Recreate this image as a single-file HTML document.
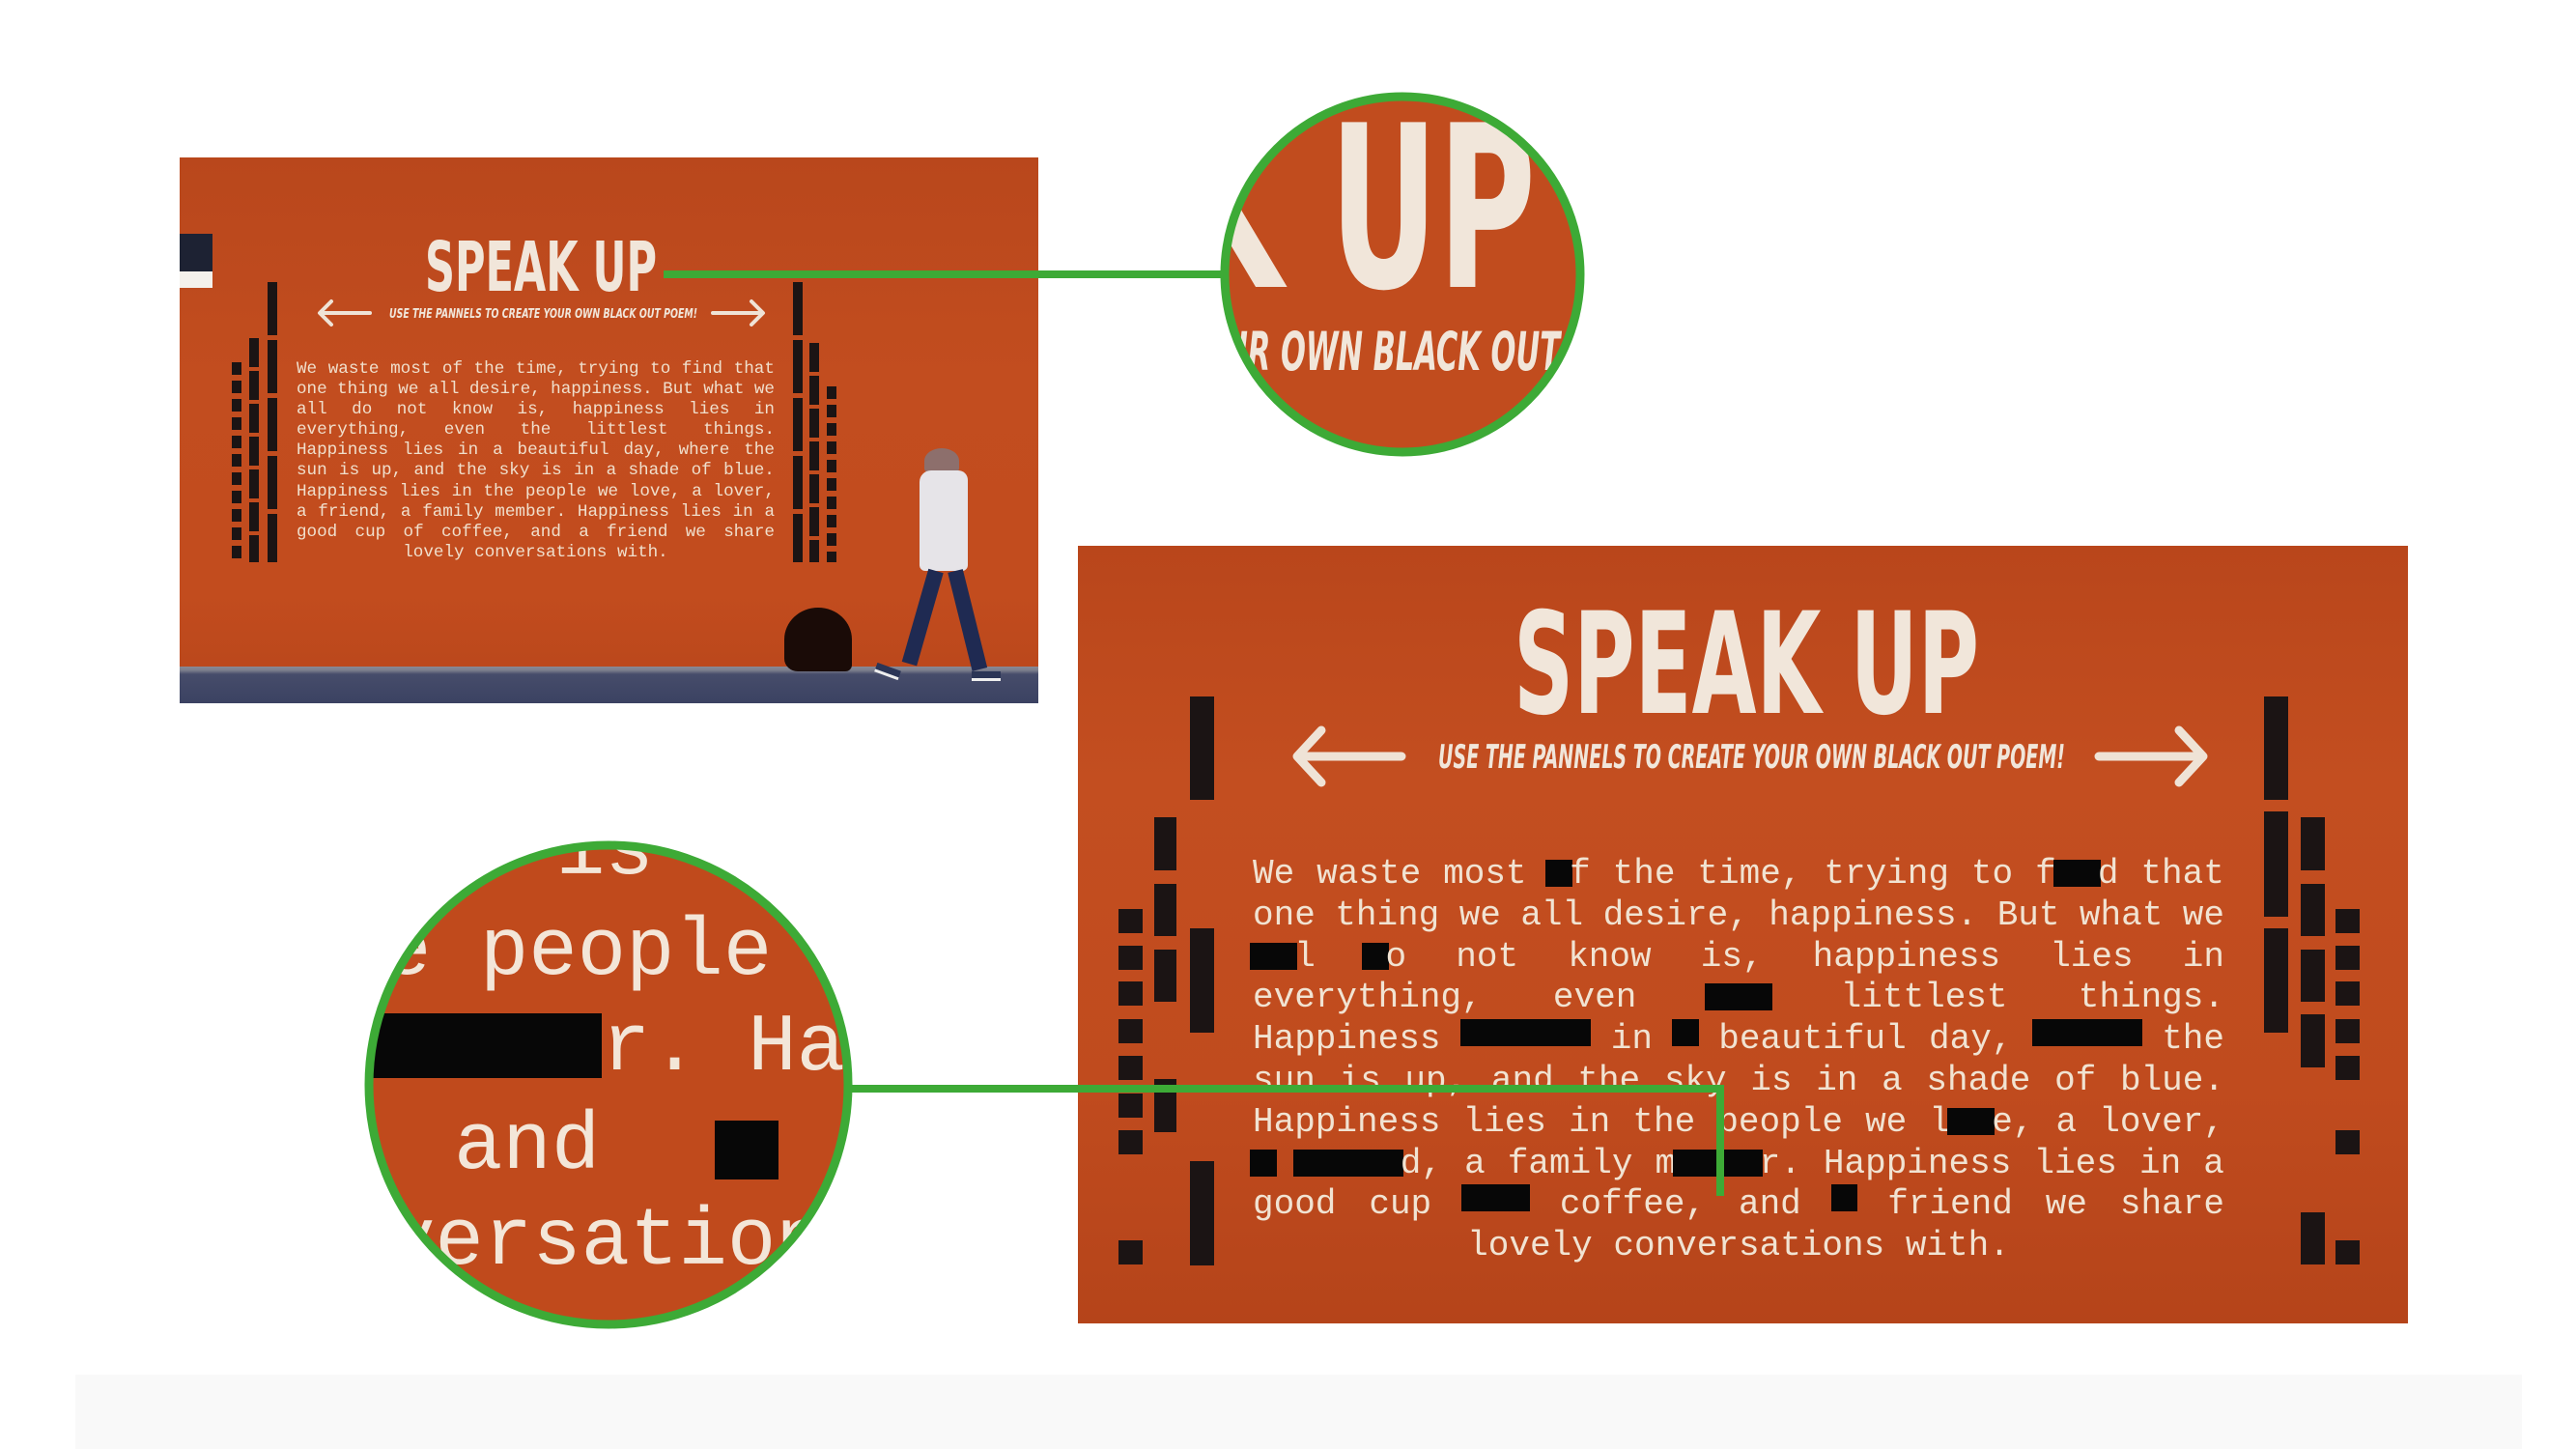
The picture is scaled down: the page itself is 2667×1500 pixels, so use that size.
<!DOCTYPE html>
<html><head><meta charset="utf-8"><style>
*{margin:0;padding:0;box-sizing:border-box}
body{width:2667px;height:1500px;background:#fff;position:relative;overflow:hidden;font-family:"Liberation Mono",monospace}
.abs{position:absolute}
.bar{position:absolute;background:#1b1414}
.ptext{position:absolute;left:1297px;top:884px;width:1006px;font-family:"Liberation Mono",monospace;font-size:36px;line-height:42.8px;color:#f1e3d2}
.ln{display:flex;justify-content:space-between;white-space:pre;height:42.8px}
.r{display:inline-block;background:#070707;color:transparent;height:28px;line-height:28px;vertical-align:1px;padding:0 3px;margin:0 -3px}
.ltext{position:absolute;left:307px;top:372px;width:495px;font-family:"Liberation Mono",monospace;font-size:17.6px;line-height:21.1px;color:#f0dfcc}
.ltext .ln{height:21.1px}
</style></head><body>

<div class="abs" style="left:78px;top:1423px;width:2533px;height:77px;background:#f9f9f9"></div>

<!-- left photo -->
<div class="abs" style="left:186px;top:163px;width:889px;height:565px;overflow:hidden;background:linear-gradient(180deg,#b9471c 0%,#c24d1f 40%,#c24c1e 80%,#b8461b 100%)">
  <div class="abs" style="left:0;top:527px;width:889px;height:38px;background:linear-gradient(180deg,#8a8a95 0,#7b7d8c 4px,#464c6a 8px,#3b4262 100%)"></div>
  <div class="abs" style="left:0;top:79px;width:34px;height:56px;background:#1d2233"></div>
  <div class="abs" style="left:0;top:118px;width:34px;height:17px;background:#f4f1ec"></div>
  <div class="abs" style="left:626px;top:466px;width:70px;height:66px;background:#1a0b07;border-radius:50% 50% 10% 20%"></div>
  <div class="abs" style="left:771px;top:301px;width:36px;height:26px;background:#8d6f6c;border-radius:50% 50% 20% 20%"></div>
  <div class="abs" style="left:766px;top:324px;width:50px;height:104px;background:#e6e4e8;border-radius:12px 10px 6px 6px"></div>
  <div class="abs" style="left:775px;top:428px;width:16px;height:100px;background:#1f2a52;transform:rotate(16deg);transform-origin:top"></div>
  <div class="abs" style="left:795px;top:428px;width:16px;height:105px;background:#1f2a52;transform:rotate(-14deg);transform-origin:top"></div>
  <div class="abs" style="left:720px;top:527px;width:26px;height:10px;background:#2b3556;border-bottom:3px solid #eee;transform:rotate(20deg)"></div>
  <div class="abs" style="left:820px;top:532px;width:30px;height:10px;background:#2b3556;border-bottom:3px solid #eee"></div>
</div>
<div class="bar" style="left:240px;top:375px;width:10px;height:207px;background:repeating-linear-gradient(180deg,#1b1414 0 13px,transparent 13px 19px)"></div>
<div class="bar" style="left:258px;top:350px;width:10px;height:232px;background:repeating-linear-gradient(180deg,#1b1414 0 30px,transparent 30px 34px)"></div>
<div class="bar" style="left:277px;top:292px;width:10px;height:290px;background:repeating-linear-gradient(180deg,#1b1414 0 55px,transparent 55px 60px)"></div>
<div class="bar" style="left:821px;top:292px;width:10px;height:290px;background:repeating-linear-gradient(180deg,#1b1414 0 55px,transparent 55px 60px)"></div>
<div class="bar" style="left:838px;top:355px;width:10px;height:227px;background:repeating-linear-gradient(180deg,#1b1414 0 30px,transparent 30px 34px)"></div>
<div class="bar" style="left:856px;top:400px;width:10px;height:182px;background:repeating-linear-gradient(180deg,#1b1414 0 13px,transparent 13px 19px)"></div>

<div class="ltext">
<div class="ln"><span>We</span><span>waste</span><span>most</span><span>of</span><span>the</span><span>time,</span><span>trying</span><span>to</span><span>find</span><span>that</span></div>
<div class="ln"><span>one</span><span>thing</span><span>we</span><span>all</span><span>desire,</span><span>happiness.</span><span>But</span><span>what</span><span>we</span></div>
<div class="ln"><span>all</span><span>do</span><span>not</span><span>know</span><span>is,</span><span>happiness</span><span>lies</span><span>in</span></div>
<div class="ln"><span>everything,</span><span>even</span><span>the</span><span>littlest</span><span>things.</span></div>
<div class="ln"><span>Happiness</span><span>lies</span><span>in</span><span>a</span><span>beautiful</span><span>day,</span><span>where</span><span>the</span></div>
<div class="ln"><span>sun</span><span>is</span><span>up,</span><span>and</span><span>the</span><span>sky</span><span>is</span><span>in</span><span>a</span><span>shade</span><span>of</span><span>blue.</span></div>
<div class="ln"><span>Happiness</span><span>lies</span><span>in</span><span>the</span><span>people</span><span>we</span><span>love,</span><span>a</span><span>lover,</span></div>
<div class="ln"><span>a</span><span>friend,</span><span>a</span><span>family</span><span>member.</span><span>Happiness</span><span>lies</span><span>in</span><span>a</span></div>
<div class="ln"><span>good</span><span>cup</span><span>of</span><span>coffee,</span><span>and</span><span>a</span><span>friend</span><span>we</span><span>share</span></div>
<div class="ln" style="justify-content:center"><span>lovely conversations with.</span></div>
</div>

<!-- big panel -->
<div class="abs" style="left:1116px;top:565px;width:1377px;height:805px;background:linear-gradient(180deg,#b9461b 0%,#c34e20 30%,#c04b1e 70%,#b5441a 100%)"></div>
<div class="bar" style="left:1232px;top:721px;width:25px;height:107px"></div>
<div class="bar" style="left:1232px;top:961px;width:25px;height:108px"></div>
<div class="bar" style="left:1232px;top:1202px;width:25px;height:108px"></div>
<div class="bar" style="left:1195px;top:846px;width:23px;height:55px"></div>
<div class="bar" style="left:1195px;top:915px;width:23px;height:54px"></div>
<div class="bar" style="left:1195px;top:983px;width:23px;height:54px"></div>
<div class="bar" style="left:1195px;top:1117px;width:23px;height:55px"></div>
<div class="bar" style="left:1158px;top:941px;width:25px;height:25px"></div>
<div class="bar" style="left:1158px;top:979px;width:25px;height:25px"></div>
<div class="bar" style="left:1158px;top:1016px;width:25px;height:25px"></div>
<div class="bar" style="left:1158px;top:1055px;width:25px;height:25px"></div>
<div class="bar" style="left:1158px;top:1093px;width:25px;height:25px"></div>
<div class="bar" style="left:1158px;top:1132px;width:25px;height:25px"></div>
<div class="bar" style="left:1158px;top:1170px;width:25px;height:25px"></div>
<div class="bar" style="left:1158px;top:1284px;width:25px;height:25px"></div>
<div class="bar" style="left:2344px;top:721px;width:25px;height:107px"></div>
<div class="bar" style="left:2344px;top:840px;width:25px;height:109px"></div>
<div class="bar" style="left:2344px;top:961px;width:25px;height:108px"></div>
<div class="bar" style="left:2382px;top:846px;width:25px;height:55px"></div>
<div class="bar" style="left:2382px;top:915px;width:25px;height:54px"></div>
<div class="bar" style="left:2382px;top:983px;width:25px;height:54px"></div>
<div class="bar" style="left:2382px;top:1050px;width:25px;height:55px"></div>
<div class="bar" style="left:2382px;top:1255px;width:25px;height:54px"></div>
<div class="bar" style="left:2418px;top:941px;width:25px;height:25px"></div>
<div class="bar" style="left:2418px;top:979px;width:25px;height:25px"></div>
<div class="bar" style="left:2418px;top:1016px;width:25px;height:25px"></div>
<div class="bar" style="left:2418px;top:1055px;width:25px;height:25px"></div>
<div class="bar" style="left:2418px;top:1093px;width:25px;height:25px"></div>
<div class="bar" style="left:2418px;top:1170px;width:25px;height:25px"></div>
<div class="bar" style="left:2418px;top:1284px;width:25px;height:25px"></div>

<div class="ptext">
<div class="ln"><span>We</span><span>waste</span><span>most</span><span><span class="r">o</span>f</span><span>the</span><span>time,</span><span>trying</span><span>to</span><span>f<span class="r">in</span>d</span><span>that</span></div>
<div class="ln"><span>one</span><span>thing</span><span>we</span><span>all</span><span>desire,</span><span>happiness.</span><span>But</span><span>what</span><span>we</span></div>
<div class="ln"><span><span class="r">al</span>l</span><span><span class="r">d</span>o</span><span>not</span><span>know</span><span>is,</span><span>happiness</span><span>lies</span><span>in</span></div>
<div class="ln"><span>everything,</span><span>even</span><span><span class="r">the</span></span><span>littlest</span><span>things.</span></div>
<div class="ln"><span>Happiness</span><span class="r">lies..</span><span>in</span><span class="r">a</span><span>beautiful</span><span>day,</span><span class="r">where</span><span>the</span></div>
<div class="ln"><span>sun</span><span>is</span><span>up,</span><span>and</span><span>the</span><span>sky</span><span>is</span><span>in</span><span>a</span><span>shade</span><span>of</span><span>blue.</span></div>
<div class="ln"><span>Happiness</span><span>lies</span><span>in</span><span>the</span><span>people</span><span>we</span><span>l<span class="r">ov</span>e,</span><span>a</span><span>lover,</span></div>
<div class="ln"><span><span class="r">a</span></span><span><span class="r">frien</span>d,</span><span>a</span><span>family</span><span>m<span class="r">embe</span>r.</span><span>Happiness</span><span>lies</span><span>in</span><span>a</span></div>
<div class="ln"><span>good</span><span>cup</span><span class="r">of.</span><span>coffee,</span><span>and</span><span class="r">a</span><span>friend</span><span>we</span><span>share</span></div>
<div class="ln" style="justify-content:center"><span>lovely conversations with.</span></div>
</div>

<svg class="abs" style="left:0;top:0" width="2667" height="1500" viewBox="0 0 2667 1500">
  <defs>
    <clipPath id="c1"><circle cx="1452" cy="284" r="184"/></clipPath>
    <clipPath id="c2"><circle cx="630" cy="1123" r="246"/></clipPath>
  </defs>
  <g font-family="DejaVu Sans Condensed, Liberation Sans Narrow, sans-serif" font-weight="bold" fill="#f1e6da">
    <text x="1567" y="738" font-size="146" textLength="482" lengthAdjust="spacingAndGlyphs">SPEAK UP</text>
    <text x="1489" y="795" font-size="34" font-style="italic" textLength="649" lengthAdjust="spacingAndGlyphs">USE THE PANNELS TO CREATE YOUR OWN BLACK OUT POEM!</text>
    <text x="440" y="301" font-size="71" textLength="240" lengthAdjust="spacingAndGlyphs">SPEAK UP</text>
    <text x="403" y="329" font-size="13" font-style="italic" textLength="319" lengthAdjust="spacingAndGlyphs">USE THE PANNELS TO CREATE YOUR OWN BLACK OUT POEM!</text>
  </g>
  <g stroke="#efe3d6" fill="none" stroke-linecap="round" stroke-linejoin="round">
    <path d="M1451 783 H1345 M1368 756 L1343 783 L1368 810" stroke-width="9"/>
    <path d="M2173 783 H2279 M2256 756 L2281 783 L2256 810" stroke-width="9"/>
    <path d="M383 324 H332 M343 312 L331 324 L343 336" stroke-width="4"/>
    <path d="M738 324 H789 M778 312 L790 324 L778 336" stroke-width="4"/>
  </g>
  <g stroke="#3daa36" stroke-width="8" fill="none">
    <path d="M687 284 H1268"/>
    <path d="M876 1127 H1781 V1238"/>
  </g>
  <g clip-path="url(#c1)">
    <rect x="1260" y="90" width="390" height="390" fill="#c14c1e"/>
    <text x="819" y="297" font-family="DejaVu Sans Condensed, sans-serif" font-weight="bold" font-size="234" fill="#f1e6da" textLength="771" lengthAdjust="spacingAndGlyphs">SPEAK UP</text>
    <text x="701" y="383" font-family="DejaVu Sans Condensed, sans-serif" font-weight="bold" font-style="italic" font-size="55" fill="#f1e6da" textLength="1038" lengthAdjust="spacingAndGlyphs">USE THE PANNELS TO CREATE YOUR OWN BLACK OUT POEM!</text>
  </g>
  <circle cx="1452" cy="284" r="184" fill="none" stroke="#3daa36" stroke-width="9"/>
  <g clip-path="url(#c2)" font-family="Liberation Mono, monospace" font-size="84" fill="#f3e6d8">
    <rect x="380" y="873" width="500" height="500" fill="#c04a1c"/>
    <text x="576" y="904">is</text>
    <text x="396" y="1008">e people</text>
    <rect x="370" y="1049" width="253" height="67" fill="#070707"/>
    <text x="623" y="1107">r. Ha</text>
    <text x="470" y="1209"> and</text>
    <rect x="740" y="1160" width="66" height="61" fill="#070707"/>
    <text x="400" y="1308">versation</text>
  </g>
  <circle cx="630" cy="1123" r="248" fill="none" stroke="#3daa36" stroke-width="9"/>
</svg>
</body></html>
